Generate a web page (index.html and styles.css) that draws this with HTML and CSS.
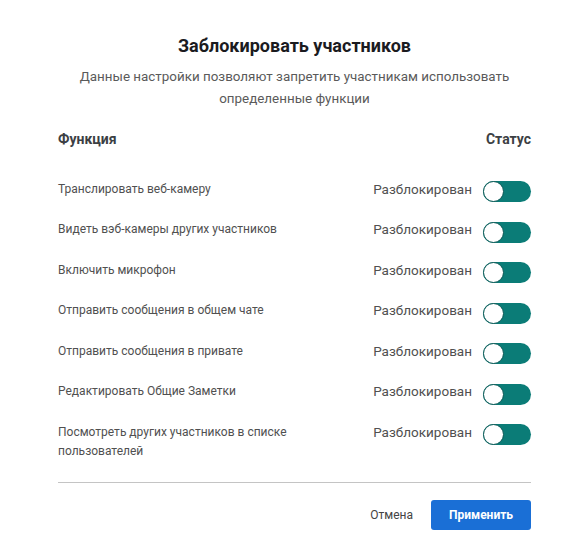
FILE: index.html
```html
<!DOCTYPE html>
<html lang="ru">
<head>
<meta charset="utf-8">
<link rel="stylesheet" href="styles.css">
</head>
<body>
<div class="dialog">
  <h1 class="title">Заблокировать участников</h1>
  <p class="subtitle">Данные настройки позволяют запретить участникам использовать определенные функции</p>
  <div class="head">
    <span>Функция</span>
    <span>Статус</span>
  </div>
  <div class="list">
    <div class="row"><div class="label">Транслировать веб-камеру</div><div class="status"><span class="state">Разблокирован</span><span class="toggle"><span class="knob"></span></span></div></div>
    <div class="row"><div class="label">Видеть вэб-камеры других участников</div><div class="status"><span class="state">Разблокирован</span><span class="toggle"><span class="knob"></span></span></div></div>
    <div class="row"><div class="label">Включить микрофон</div><div class="status"><span class="state">Разблокирован</span><span class="toggle"><span class="knob"></span></span></div></div>
    <div class="row"><div class="label">Отправить сообщения в общем чате</div><div class="status"><span class="state">Разблокирован</span><span class="toggle"><span class="knob"></span></span></div></div>
    <div class="row"><div class="label">Отправить сообщения в привате</div><div class="status"><span class="state">Разблокирован</span><span class="toggle"><span class="knob"></span></span></div></div>
    <div class="row"><div class="label">Редактировать Общие Заметки</div><div class="status"><span class="state">Разблокирован</span><span class="toggle"><span class="knob"></span></span></div></div>
    <div class="row"><div class="label">Посмотреть других участников в списке пользователей</div><div class="status"><span class="state">Разблокирован</span><span class="toggle"><span class="knob"></span></span></div></div>
  </div>
  <div class="divider"></div>
  <div class="footer">
    <button class="cancel">Отмена</button>
    <button class="apply">Применить</button>
  </div>
</div>
</body>
</html>
```
FILE: styles.css
```css
* { box-sizing: border-box; }
html, body { margin: 0; background: #fff; }
body { font-family: Roboto, "Liberation Sans", sans-serif; color: #333; }
.dialog { width: 586px; padding: 34px 55px 0 58px; }
.title { margin: 0; font-size: 18px; line-height: 24px; font-weight: 700; color: #1b1b1f; text-align: center; }
.subtitle { margin: 8px auto 0; width: 450px; font-size: 13.4px; line-height: 22px; color: #5a5a5a; text-align: center; }
.head { display: flex; justify-content: space-between; margin-top: 19.5px; font-size: 14px; line-height: 19px; font-weight: 700; color: #3c3f44; }
.list { margin-top: 22.5px; }
.row { display: flex; justify-content: space-between; align-items: flex-start; padding: 8.5px 0 9.5px; }
.label { width: 250px; font-size: 12px; line-height: 19px; color: #505050; }
.status { display: flex; align-items: flex-start; gap: 11px; }
.state { font-size: 13.5px; line-height: 19px; color: #505050; }
.toggle { position: relative; width: 48px; height: 21px; margin-top: 1.5px; border-radius: 11px; background: #0b7c77; }
.knob { position: absolute; left: 0; top: 0; width: 21px; height: 21px; border-radius: 50%; background: #fff; border: 1.5px solid #0a5855; }
.divider { margin-top: 12px; height: 1px; background: #c4c4c4; }
.footer { display: flex; justify-content: flex-end; align-items: center; gap: 18px; margin-top: 17px; }
.cancel { border: 0; background: none; padding: 0; font-family: inherit; font-size: 12px; color: #444; }
.apply { width: 100px; height: 30px; border: 0; border-radius: 3px; background: #1a6fd6; color: #fff; font-family: inherit; font-size: 12px; font-weight: 700; }
```
